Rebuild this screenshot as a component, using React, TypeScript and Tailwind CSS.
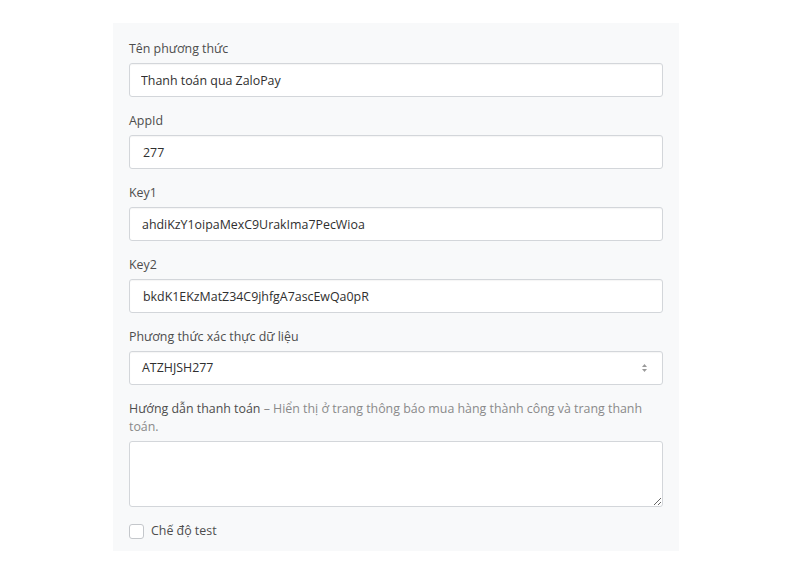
import React from "react";

const fields = [
  { label: "Tên phương thức", value: "Thanh toán qua ZaloPay", pad: "pl-[11px]" },
  { label: "AppId", value: "277", pad: "pl-[13px]" },
  { label: "Key1", value: "ahdiKzY1oipaMexC9UrakIma7PecWioa", pad: "pl-[12px]" },
  { label: "Key2", value: "bkdK1EKzMatZ34C9jhfgA7ascEwQa0pR", pad: "pl-[13px]" },
];

const inputClass =
  "h-[34px] w-full rounded-[3px] border border-[#d3d6da] bg-white text-[12.4px] text-[#2f2f2f] shadow-[inset_0_1px_1px_rgba(0,0,0,0.04)] outline-none";

const App = () => {
  return (
    <div
      className="h-[562px] w-[800px] bg-white pt-[23px] pl-[113px]"
      style={{ fontFamily: '"Open Sans", "Noto Sans", sans-serif' }}
    >
      <div className="flex w-[566px] flex-col gap-[15px] bg-[#f8f9fa] px-4 pt-[17px] pb-[11px]">
        {fields.map((field) => (
          <div key={field.label} className="flex flex-col gap-[5px]">
            <label className="text-[12.4px] leading-[18px] text-[#4d4d4d]">
              {field.label}
            </label>
            <input
              readOnly
              value={field.value}
              className={`${inputClass} ${field.pad}`}
            />
          </div>
        ))}

        <div className="flex flex-col gap-[5px]">
          <label className="text-[12.4px] leading-[18px] text-[#4d4d4d]">
            Phương thức xác thực dữ liệu
          </label>
          <div className={`${inputClass} flex items-center justify-between pl-[12px] pr-[14px]`}>
            <span>ATZHJSH277</span>
            <svg width="7" height="10" viewBox="0 0 7 10">
              <path d="M3.5 1 L6 4 L1 4 Z" fill="#9a9a9a" />
              <path d="M3.5 9 L6 6 L1 6 Z" fill="#9a9a9a" />
            </svg>
          </div>
        </div>

        <div className="flex flex-col gap-[5px]">
          <p className="text-[12.4px] leading-[18px] text-[#4d4d4d]">
            Hướng dẫn thanh toán{" "}
            <span className="text-[#8a8a8a]">
              – Hiển thị ở trang thông báo mua hàng thành công và trang thanh toán.
            </span>
          </p>
          <textarea
            readOnly
            className="h-[66px] w-full rounded-[3px] border border-[#d3d6da] bg-white p-2 text-[13px] outline-none"
          />
        </div>

        <div className="flex items-center gap-[7px]">
          <span className="h-[15px] w-[15px] rounded-[3px] border border-[#c4c7cb] bg-white" />
          <span className="text-[12.4px] leading-[18px] text-[#4d4d4d]">Chế độ test</span>
        </div>
      </div>
    </div>
  );
};

export default App;
